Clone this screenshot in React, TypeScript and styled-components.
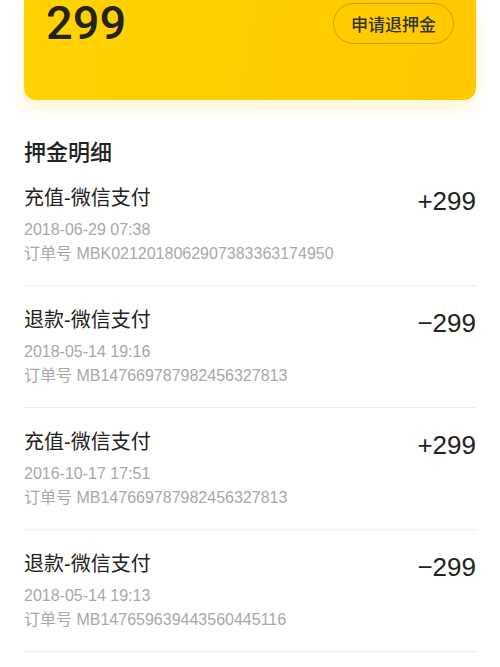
import React from 'react';
import styled, { createGlobalStyle } from 'styled-components';

const GlobalStyle = createGlobalStyle`
  html, body {
    margin: 0;
    padding: 0;
    background: #fff;
  }
  body {
    font-family: "Liberation Sans", "Noto Sans CJK SC", sans-serif;
    color: #222;
  }
`;

const Page = styled.div`
  width: 500px;
  padding: 0 24px;
  box-sizing: border-box;
`;

const DepositCard = styled.div`
  height: 100px;
  border-radius: 0 0 12px 12px;
  background: linear-gradient(100deg, #ffd300 0%, #ffcd00 60%, #ffc800 100%);
  box-shadow: 0 8px 18px rgba(255, 196, 0, 0.18);
  padding: 0 22px;
  box-sizing: border-box;
`;

const CardRow = styled.div`
  height: 45px;
  display: flex;
  align-items: center;
  justify-content: space-between;
`;

const Amount = styled.div`
  font-family: Roboto, "Liberation Sans", sans-serif;
  font-size: 47px;
  font-weight: 500;
  line-height: 40px;
  color: #222;
`;

const RefundButton = styled.button`
  height: 41px;
  padding: 0 17px;
  border-radius: 21px;
  border: 1px solid #c9a000;
  background: transparent;
  font-family: "Noto Sans CJK SC", sans-serif;
  font-size: 17px;
  font-weight: 500;
  color: #333;
  margin-top: 1px;
`;

const SectionTitle = styled.h2`
  margin: 36px 0 0;
  font-family: "Noto Sans CJK SC", sans-serif;
  font-size: 22px;
  font-weight: 500;
  line-height: 28px;
  color: #222;
`;

const Record = styled.div`
  display: flex;
  justify-content: space-between;
  align-items: flex-start;
  padding: 22px 0 19px;
  border-bottom: 1px solid #ececec;
`;

const RecordInfo = styled.div`
  display: flex;
  flex-direction: column;
`;

const RecordTitle = styled.div`
  font-size: 20px;
  line-height: 24px;
  color: #222;
  margin-bottom: 8px;
`;

const RecordMeta = styled.div`
  font-size: 16px;
  line-height: 24px;
  color: #a8a8a8;
`;

const RecordAmount = styled.div`
  font-size: 26px;
  line-height: 30px;
  color: #222;
`;

type Item = {
  title: string;
  time: string;
  order: string;
  amount: string;
};

const records: Item[] = [
  { title: '充值-微信支付', time: '2018-06-29 07:38', order: 'MBK0212018062907383363174950', amount: '+299' },
  { title: '退款-微信支付', time: '2018-05-14 19:16', order: 'MB147669787982456327813', amount: '−299' },
  { title: '充值-微信支付', time: '2016-10-17 17:51', order: 'MB147669787982456327813', amount: '+299' },
  { title: '退款-微信支付', time: '2018-05-14 19:13', order: 'MB147659639443560445116', amount: '−299' },
];

export default function App() {
  return (
    <>
      <GlobalStyle />
      <Page>
        <DepositCard>
          <CardRow>
            <Amount>299</Amount>
            <RefundButton>申请退押金</RefundButton>
          </CardRow>
        </DepositCard>
        <SectionTitle>押金明细</SectionTitle>
        {records.map((r, i) => (
          <Record key={i}>
            <RecordInfo>
              <RecordTitle>{r.title}</RecordTitle>
              <RecordMeta>{r.time}</RecordMeta>
              <RecordMeta>订单号 {r.order}</RecordMeta>
            </RecordInfo>
            <RecordAmount>{r.amount}</RecordAmount>
          </Record>
        ))}
      </Page>
    </>
  );
}
